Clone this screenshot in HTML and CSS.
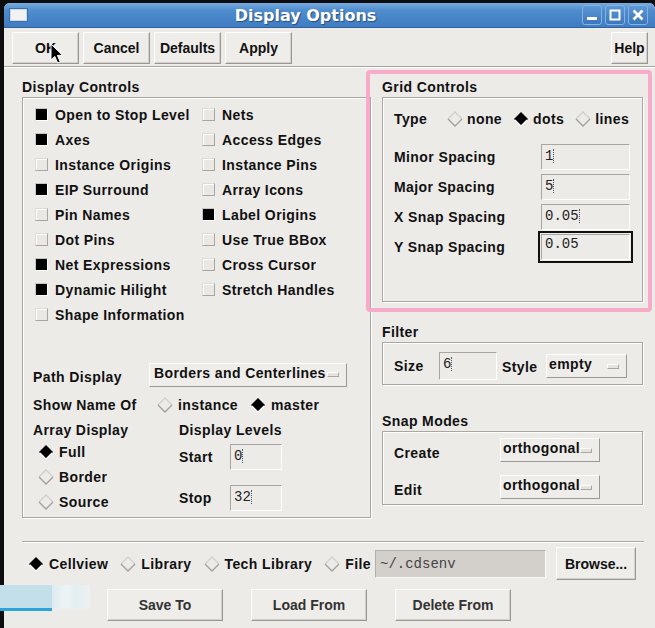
FILE: index.html
```html
<!DOCTYPE html>
<html>
<head>
<meta charset="utf-8">
<title>Display Options</title>
<link rel="stylesheet" href="styles.css">
</head>
<body>
<div class="window">
  <div class="titlebar">
    <div class="tb-icon"></div>
    <div class="tb-title">Display Options</div>
    <div class="tb-btns">
      <span class="tb-btn"><svg viewBox="0 0 20 20" width="20" height="20"><rect x="5" y="12" width="10" height="3" fill="#fff"/></svg></span>
      <span class="tb-btn"><svg viewBox="0 0 20 20" width="20" height="20"><rect x="5.5" y="5.5" width="9" height="9" fill="none" stroke="#fff" stroke-width="2"/></svg></span>
      <span class="tb-btn"><svg viewBox="0 0 20 20" width="20" height="20"><path d="M5.5 5.5 L14.5 14.5 M14.5 5.5 L5.5 14.5" stroke="#fff" stroke-width="2.6"/></svg></span>
    </div>
  </div>

  <div class="toolbar">
    <button class="btn tbtn">OK</button>
    <button class="btn tbtn">Cancel</button>
    <button class="btn tbtn">Defaults</button>
    <button class="btn tbtn">Apply</button>
    <div class="spacer"></div>
    <button class="btn help">Help</button>
  </div>
  <div class="sep"></div>

  <div class="main">
    <div class="leftcol">
      <div class="gtitle">Display Controls</div>
      <div class="gbox dcbox">
        <div class="checkgrid">
          <div class="ccol c1">
            <div class="chk"><span class="box on"></span>Open to Stop Level</div>
            <div class="chk"><span class="box on"></span>Axes</div>
            <div class="chk"><span class="box"></span>Instance Origins</div>
            <div class="chk"><span class="box on"></span>EIP Surround</div>
            <div class="chk"><span class="box"></span>Pin Names</div>
            <div class="chk"><span class="box"></span>Dot Pins</div>
            <div class="chk"><span class="box on"></span>Net Expressions</div>
            <div class="chk"><span class="box on"></span>Dynamic Hilight</div>
            <div class="chk"><span class="box"></span>Shape Information</div>
          </div>
          <div class="ccol">
            <div class="chk"><span class="box"></span>Nets</div>
            <div class="chk"><span class="box"></span>Access Edges</div>
            <div class="chk"><span class="box"></span>Instance Pins</div>
            <div class="chk"><span class="box"></span>Array Icons</div>
            <div class="chk"><span class="box on"></span>Label Origins</div>
            <div class="chk"><span class="box"></span>Use True BBox</div>
            <div class="chk"><span class="box"></span>Cross Cursor</div>
            <div class="chk"><span class="box"></span>Stretch Handles</div>
          </div>
        </div>

        <div class="lower">
          <div class="row pathrow">
            <span class="lbl pathlbl">Path Display</span>
            <span class="dd ddpath"><span class="ddtext">Borders and Centerlines</span><span class="ind"></span></span>
          </div>
          <div class="row namerow">
            <span class="lbl namelbl">Show Name Of</span>
            <span class="radio"><svg class="dia" viewBox="0 0 16 16"><path d="M1 8 L8 1 L15 8" fill="none" stroke="#d2cfcb" stroke-width="1.3"/><path d="M1 8 L8 15 L15 8" fill="none" stroke="#a29e9a" stroke-width="1.3"/></svg>instance</span>
            <span class="radio r2"><svg class="dia" viewBox="0 0 16 16"><path d="M1 8 L8 1 L15 8 L8 15 Z" fill="#000"/><path d="M2 9 L8 15 L14 9" fill="none" stroke="#fff" stroke-width="1.2"/></svg>master</span>
          </div>
          <div class="levels">
            <div class="arraycol">
              <div class="subhead">Array Display</div>
              <div class="radio arow"><svg class="dia" viewBox="0 0 16 16"><path d="M1 8 L8 1 L15 8 L8 15 Z" fill="#000"/><path d="M2 9 L8 15 L14 9" fill="none" stroke="#fff" stroke-width="1.2"/></svg>Full</div>
              <div class="radio arow"><svg class="dia" viewBox="0 0 16 16"><path d="M1 8 L8 1 L15 8" fill="none" stroke="#d2cfcb" stroke-width="1.3"/><path d="M1 8 L8 15 L15 8" fill="none" stroke="#a29e9a" stroke-width="1.3"/></svg>Border</div>
              <div class="radio arow"><svg class="dia" viewBox="0 0 16 16"><path d="M1 8 L8 1 L15 8" fill="none" stroke="#d2cfcb" stroke-width="1.3"/><path d="M1 8 L8 15 L15 8" fill="none" stroke="#a29e9a" stroke-width="1.3"/></svg>Source</div>
            </div>
            <div class="levelcol">
              <div class="subhead">Display Levels</div>
              <div class="row lvrow first"><span class="lbl lvlbl">Start</span><span class="field lvfield">0<i class="caret"></i></span></div>
              <div class="row lvrow second"><span class="lbl lvlbl">Stop</span><span class="field lvfield">32<i class="caret"></i></span></div>
            </div>
          </div>
        </div>
      </div>
    </div>

    <div class="rightcol">
      <div class="gtitle">Grid Controls</div>
      <div class="gbox gridbox">
        <div class="row typerow">
          <span class="lbl typelbl">Type</span>
          <span class="radio"><svg class="dia" viewBox="0 0 16 16"><path d="M1 8 L8 1 L15 8" fill="none" stroke="#d2cfcb" stroke-width="1.3"/><path d="M1 8 L8 15 L15 8" fill="none" stroke="#a29e9a" stroke-width="1.3"/></svg>none</span>
          <span class="radio r2"><svg class="dia" viewBox="0 0 16 16"><path d="M1 8 L8 1 L15 8 L8 15 Z" fill="#000"/><path d="M2 9 L8 15 L14 9" fill="none" stroke="#fff" stroke-width="1.2"/></svg>dots</span>
          <span class="radio r2"><svg class="dia" viewBox="0 0 16 16"><path d="M1 8 L8 1 L15 8" fill="none" stroke="#d2cfcb" stroke-width="1.3"/><path d="M1 8 L8 15 L15 8" fill="none" stroke="#a29e9a" stroke-width="1.3"/></svg>lines</span>
        </div>
        <div class="fields">
          <div class="row frow"><span class="lbl flbl">Minor Spacing</span><span class="field gfield">1<i class="caret"></i></span></div>
          <div class="row frow"><span class="lbl flbl">Major Spacing</span><span class="field gfield">5<i class="caret"></i></span></div>
          <div class="row frow"><span class="lbl flbl">X Snap Spacing</span><span class="field gfield">0.05<i class="caret"></i></span></div>
          <div class="row frow"><span class="lbl flbl">Y Snap Spacing</span><span class="field gfield focus">0.05</span></div>
        </div>
      </div>

      <div class="gtitle filtertitle">Filter</div>
      <div class="gbox filterbox">
        <div class="row filterrow">
          <span class="lbl sizelbl">Size</span>
          <span class="field sizefield">6<i class="caret"></i></span>
          <span class="lbl stylelbl">Style</span>
          <span class="dd ddstyle"><span class="ddtext">empty</span><span class="ind"></span></span>
        </div>
      </div>

      <div class="gtitle snaptitle">Snap Modes</div>
      <div class="gbox snapbox">
        <div class="row snaprow"><span class="lbl snaplbl">Create</span><span class="dd ddsnap"><span class="ddtext">orthogonal</span><span class="ind"></span></span></div>
        <div class="row snaprow second"><span class="lbl snaplbl">Edit</span><span class="dd ddsnap"><span class="ddtext">orthogonal</span><span class="ind"></span></span></div>
      </div>
    </div>
  </div>

  <div class="sep bottomsep"></div>

  <div class="row sourcerow">
    <span class="radio"><svg class="dia" viewBox="0 0 16 16"><path d="M1 8 L8 1 L15 8 L8 15 Z" fill="#000"/><path d="M2 9 L8 15 L14 9" fill="none" stroke="#fff" stroke-width="1.2"/></svg>Cellview</span>
    <span class="radio r2"><svg class="dia" viewBox="0 0 16 16"><path d="M1 8 L8 1 L15 8" fill="none" stroke="#d2cfcb" stroke-width="1.3"/><path d="M1 8 L8 15 L15 8" fill="none" stroke="#a29e9a" stroke-width="1.3"/></svg>Library</span>
    <span class="radio r2"><svg class="dia" viewBox="0 0 16 16"><path d="M1 8 L8 1 L15 8" fill="none" stroke="#d2cfcb" stroke-width="1.3"/><path d="M1 8 L8 15 L15 8" fill="none" stroke="#a29e9a" stroke-width="1.3"/></svg>Tech Library</span>
    <span class="radio r2"><svg class="dia" viewBox="0 0 16 16"><path d="M1 8 L8 1 L15 8" fill="none" stroke="#d2cfcb" stroke-width="1.3"/><path d="M1 8 L8 15 L15 8" fill="none" stroke="#a29e9a" stroke-width="1.3"/></svg>File</span>
    <span class="field filefield">~/.cdsenv</span>
    <button class="btn browse">Browse...</button>
  </div>

  <div class="row actionrow">
    <button class="btn abtn">Save To</button>
    <button class="btn abtn">Load From</button>
    <button class="btn abtn">Delete From</button>
  </div>

  <div class="highlight"></div>
  <svg class="cursor" viewBox="0 0 14 22" width="14" height="22"><path d="M1 1 L1 17 L4.8 13.4 L7.6 20 L10.2 18.9 L7.4 12.4 L12.6 12.4 Z" fill="#000" stroke="#fff" stroke-width="1"/></svg>
</div>
<div class="overlay">
  <div class="ov-blue"></div>
  <div class="ov-white"></div>
  <div class="ov-line"></div>
  <div class="ov-grey"></div>
</div>
</body>
</html>
```

FILE: styles.css
```css
* { box-sizing: border-box; }
html, body { margin: 0; padding: 0; }
body {
  background: #0d0d0f;
  width: 655px;
  height: 628px;
  overflow: hidden;
  font-family: "Liberation Sans", Arial, sans-serif;
  font-weight: bold;
  font-size: 14px;
  color: #111;
  position: relative;
}

.window {
  position: relative;
  margin: 3px 0 0 4px;
  width: 651px;
  height: 625px;
  background: #edebe8;
  border-radius: 6px 6px 0 0;
}

/* title bar */
.titlebar {
  height: 25px;
  display: flex;
  align-items: center;
  padding: 0 7px 0 6px;
  border-radius: 6px 6px 0 0;
  background: linear-gradient(#79acdf 0%, #4f8dce 30%, #3f7cc1 100%);
  border-bottom: 1px solid #2f62a0;
}
.tb-icon {
  width: 17px;
  height: 12px;
  background: #f2f2f2;
  border: 1px solid #cfd9e6;
  box-shadow: 0 0 0 1px #3a6fae;
}
.tb-title {
  flex: 1;
  text-align: center;
  font-family: "DejaVu Sans", sans-serif;
  font-size: 16px;
  font-weight: bold;
  color: #fff;
  text-shadow: 1px 1px 1px #2a4f80;
  padding-left: 2px;
}
.tb-btns { display: flex; gap: 3px; }
.tb-btn {
  width: 20px;
  height: 20px;
  border-radius: 3px;
  border: 1px solid #86b2e0;
  background: linear-gradient(#5d98d6, #3c77bb);
  display: block;
  overflow: hidden;
}
.tb-btn svg { display: block; margin: -1px; }

/* buttons */
.btn {
  font-family: "Liberation Sans", Arial, sans-serif;
  font-weight: bold;
  font-size: 14px;
  color: #111;
  background: #efedea;
  border: 1px solid;
  border-color: #fdfdfc #9b9793 #9b9793 #fdfdfc;
  box-shadow: inset -1px -1px 0 #d4d1cd;
  padding: 0;
  margin: 0;
}

.toolbar {
  height: 38px;
  display: flex;
  align-items: flex-start;
  padding: 4px 7px 0 8px;
  gap: 4px;
}
.tbtn { width: 67px; height: 32px; }
.spacer { flex: 1; }
.help { width: 37px; height: 32px; }

.sep {
  height: 2px;
  border-top: 1px solid #a9a6a2;
  border-bottom: 1px solid #fff;
}

/* main */
.main {
  display: flex;
  padding: 10px 0 0 18px;
  gap: 11px;
}
.leftcol { width: 349px; }
.rightcol { width: 261px; }

.gtitle {
  height: 19px;
  line-height: 18px;
  letter-spacing: 0.4px;
  white-space: nowrap;
}
.gbox {
  border: 1px solid #aaa7a3;
  box-shadow: inset 1px 1px 0 #fff, 1px 1px 0 #fff;
}

.lbl, .chk, .radio, .subhead, .ddtext { letter-spacing: 0.4px; white-space: nowrap; }

.dcbox {
  height: 421px;
  padding: 4px 0 0 12px;
}
.checkgrid { display: flex; }
.ccol.c1 { width: 167px; }
.chk {
  height: 25px;
  display: flex;
  align-items: center;
}
.box {
  width: 13px;
  height: 13px;
  margin-right: 7px;
  border: 1px solid;
  border-color: #dedbd7 #a9a5a1 #a9a5a1 #dedbd7;
  box-shadow: inset 1px 1px 0 #fff;
  background: #ebe8e4;
  flex: none;
}
.box.on {
  background: #000;
  box-shadow: none;
  border-color: #c9c6c2 #fff #fff #c9c6c2;
}

.row { display: flex; align-items: center; }

.lower { margin-left: -2px; }
.pathrow { height: 25px; margin-top: 35px; }
.pathlbl { width: 116px; padding-top: 5px; }
.dd {
  display: flex;
  align-items: center;
  justify-content: space-between;
  height: 24px;
  border: 1px solid;
  border-color: #fdfdfc #9b9793 #9b9793 #fdfdfc;
  background: #efedea;
  padding: 0 7px 0 4px;
}
.ddtext { line-height: 16px; margin-top: -4px; }
.ind {
  width: 12px;
  height: 5px;
  background: #e6e3df;
  border: 1px solid;
  border-color: #fff #aaa6a2 #aaa6a2 #fff;
  flex: none;
}
.ddpath { width: 198px; }

.namerow { height: 24px; margin-top: 6px; }
.namelbl { width: 124px; }
.radio { display: inline-flex; align-items: center; }
.dia { width: 16px; height: 16px; margin-right: 5px; flex: none; }
.r2 { margin-left: 12px; }

.levels { display: flex; margin-top: 4px; }
.arraycol { width: 145px; }
.subhead { height: 18px; line-height: 18px; }
.arow { display: flex; height: 25px; padding-left: 5px; }
.levelcol { flex: 1; padding-left: 1px; }
.lvrow { height: 26px; }
.lvrow.first { margin-top: 5px; }
.lvrow.second { margin-top: 15px; }
.lvlbl { width: 51px; }

.field {
  display: block;
  border: 1px solid;
  border-color: #a9a6a2 #fff #fff #a9a6a2;
  background: #edebe8;
  font-family: "Liberation Mono", "DejaVu Sans Mono", monospace;
  font-weight: normal;
  font-size: 14px;
  line-height: 16px;
  color: #222;
  padding: 3px 3px 0 3px;
  white-space: nowrap;
}
.caret {
  display: inline-block;
  width: 1px;
  height: 14px;
  margin-left: 0;
  vertical-align: -3px;
  border-left: 1px dotted #555;
}
.lvfield { width: 52px; height: 26px; }

/* grid controls */
.gridbox { height: 205px; padding: 9px 0 0 11px; }
.typerow { height: 24px; }
.typelbl { width: 53px; }
.typerow .dia { margin-right: 4px; }
.typerow .r2 { margin-left: 11px; }
.fields { margin-top: 13px; display: flex; flex-direction: column; gap: 4px; }
.frow { height: 26px; }
.flbl { width: 147px; }
.gfield { width: 89px; height: 26px; }
.gfield.focus {
  outline: 2px solid #111;
  outline-offset: 1px;
  padding-top: 1px;
}

.filtertitle { margin-top: 21px; }
.filterbox { height: 43px; padding: 9px 0 0 11px; }
.filterrow { height: 28px; }
.sizelbl { width: 45px; }
.sizefield { width: 58px; height: 28px; }
.stylelbl { width: 44px; margin-left: 5px; padding-top: 2px; }
.ddstyle { width: 81px; padding-left: 2px; }

.snaptitle { margin-top: 27px; }
.snapbox { height: 74px; padding: 6px 0 0 11px; }
.snaprow { height: 24px; }
.snaprow.second { margin-top: 13px; }
.snaplbl { width: 106px; padding-top: 6px; }
.ddsnap { width: 100px; padding-left: 2px; }

/* bottom */
.bottomsep { margin: 23px 11px 0 18px; }
.sourcerow {
  height: 33px;
  margin-top: 4px;
  padding-left: 24px;
}
.sourcerow .dia { margin-right: 5px; }
.sourcerow .r2 { margin-left: 12px; }
.filefield {
  width: 171px;
  height: 28px;
  margin-left: 4px;
  background: #d3d0cc;
  border-color: #b3afab #fafaf9 #fafaf9 #b3afab;
  color: #444;
  padding: 5px 4px 0 4px;
}
.browse { width: 80px; height: 33px; margin-left: 10px; }

.actionrow {
  margin-top: 9px;
  padding-left: 103px;
  gap: 28px;
}
.abtn { width: 116px; height: 32px; color: #333; }

/* overlays */
.highlight {
  position: absolute;
  left: 362px;
  top: 67px;
  width: 286px;
  height: 242px;
  border: 4px solid #f8aac9;
  border-radius: 4px;
  pointer-events: none;
}
.cursor {
  position: absolute;
  left: 46px;
  top: 40px;
}
.overlay {
  position: absolute;
  left: 0;
  top: 582px;
  width: 95px;
  height: 46px;
}
.ov-blue {
  position: absolute; left: 0; top: 3px; width: 52px; height: 23px;
  background: #c3e0ea;
}
.ov-white {
  position: absolute; left: 52px; top: 3px; width: 38px; height: 23px;
  background: linear-gradient(90deg, #dcebf0 0, #eef4f6 40%, #e2eef2 60%, #edf1f2 100%);
}
.ov-line {
  position: absolute; left: 0; top: 26px; width: 52px; height: 3px;
  background: #2aa4dd;
}
.ov-grey {
  position: absolute; left: 52px; top: 26px; width: 36px; height: 3px;
  background: #eceeee;
}
```
